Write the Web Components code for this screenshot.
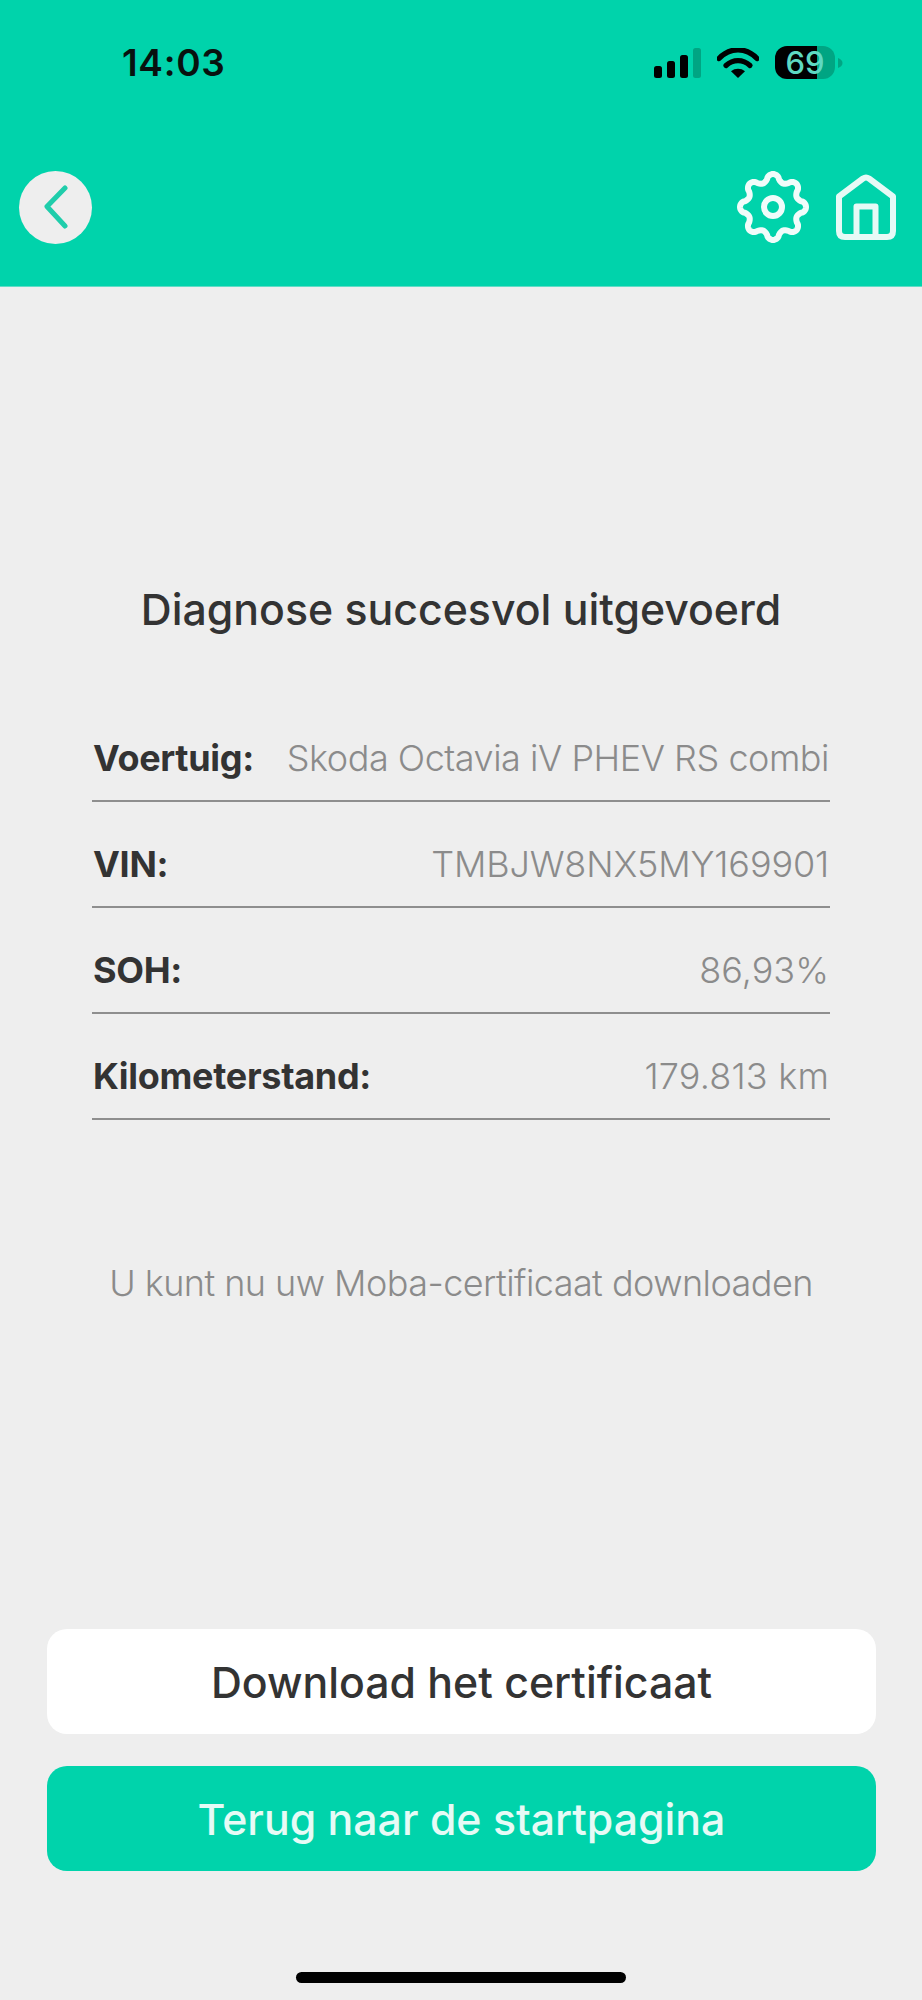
<!DOCTYPE html>
<html lang="nl"><head><meta charset="utf-8"><title>Diagnose</title>
<style>
html,body{margin:0;padding:0;background:#eeeeee}
body{font-family:Inter,"Liberation Sans",sans-serif}
</style></head><body>
<app-screen>
  <status-bar slot="top"></status-bar>
  <nav-bar slot="top"></nav-bar>
  <h-title>Diagnose succesvol uitgevoerd</h-title>
  <info-row label="Voertuig:" value="Skoda Octavia iV PHEV RS combi" style="--vs:-.47px"></info-row>
  <info-row label="VIN:" value="TMBJW8NX5MY169901" style="--vs:-.15px"></info-row>
  <info-row label="SOH:" value="86,93%" style="--vs:.05px"></info-row>
  <info-row label="Kilometerstand:" value="179.813 km" style="--vs:.2px"></info-row>
  <note-text>U kunt nu uw Moba-certificaat downloaden</note-text>
  <action-button slot="actions" kind="light">Download het certificaat</action-button>
  <action-button slot="actions" kind="brand">Terug naar de startpagina</action-button>
</app-screen>
<script>
function def(name, html, init){
  customElements.define(name, class extends HTMLElement{
    constructor(){super();const r=this.attachShadow({mode:'open'});r.innerHTML=html;if(init)init(r,this);}
  });
}
def('app-screen',`<style>
:host{display:flex;flex-direction:column;width:922px;height:2000px;overflow:hidden;background:#eee}
header{box-sizing:border-box;height:287px;background:#00d3ab;border-bottom:1px solid #5fdcc6;display:flex;flex-direction:column;flex:none}
main{flex:none;height:1342px;box-sizing:border-box;padding-top:298px}
.acts{display:flex;flex-direction:column;gap:32px;padding:0 46px 0 47px}
.home{flex:none;align-self:center;width:330px;height:11px;border-radius:6px;background:#000;margin-top:101px}
</style><header><slot name="top"></slot></header><main><slot></slot></main><div class="acts"><slot name="actions"></slot></div><div class="home"></div>`);

def('status-bar',`<style>
:host{display:flex;align-items:center;justify-content:space-between;height:47px;margin-top:39px;padding:0 79px 0 122px;flex:none}
.t{font:600 37px/47px Inter,"Liberation Sans",sans-serif;color:#08120f;letter-spacing:.7px}
.r{display:flex;align-items:center}
svg{display:block}
.batt{position:relative;width:68px;height:33px;margin-left:16px}
.n{position:absolute;left:4px;top:0;width:52px;height:33px;text-align:center;font:500 31px/33px Inter,"Liberation Sans",sans-serif;color:#5ed9c2}
</style><span class="t">14:03</span><div class="r">
<svg width="47" height="30" viewBox="0 0 47 30"><rect x="0" y="18" width="8" height="12" rx="2.5" fill="#000"/><rect x="13" y="13" width="8" height="17" rx="2.5" fill="#000"/><rect x="26" y="7" width="8" height="23" rx="2.5" fill="#000"/><rect x="39" y="0" width="8" height="30" rx="2.5" fill="#00a583"/></svg>
<svg style="margin-left:16px" width="42" height="30" viewBox="0 0 42 30"><path d="M2 10.5C13 -1 29 -1 40 10.5" fill="none" stroke="#000" stroke-width="5.4" stroke-linecap="round"/><path d="M9 17.5C16 11 26 11 33 17.5" fill="none" stroke="#000" stroke-width="5.2" stroke-linecap="round"/><path d="M14 23.3C18 20 24 20 28 23.3L21 30Z" fill="#000"/></svg>
<div class="batt"><svg width="68" height="33" viewBox="0 0 68 33"><path d="M12 0H42V33H12A12 12 0 0 1 0 21V12A12 12 0 0 1 12 0Z" fill="#000"/><path d="M42 0H48A12 12 0 0 1 60 12V21A12 12 0 0 1 48 33H42Z" fill="#00a583"/><path d="M63 12C66 13 67.500 15 67.500 17C67.500 19 66 21 63 22Z" fill="#00a583"/></svg><span class="n">69</span></div>
</div>`);

def('nav-bar',`<style>
:host{display:flex;align-items:center;justify-content:space-between;padding:0 26px 0 19px;margin-top:84px;flex:none}
.back{width:73px;height:73px;border-radius:50%;background:#eeeeee;display:flex;align-items:center;justify-content:center}
.r{display:flex;align-items:center;gap:26px}
svg{display:block}
</style>
<div class="back"><svg width="26" height="44" viewBox="0 0 26 44"><path d="M22 3L4 21.500L22 41" fill="none" stroke="#1fcdab" stroke-width="5" stroke-linecap="round" stroke-linejoin="round"/></svg></div>
<div class="r"><svg id="gear" width="74" height="74" viewBox="-37 -37 74 74"><path id="gp" fill="none" stroke="#f0fcfa" stroke-width="6"/><circle r="9" fill="none" stroke="#f0fcfa" stroke-width="6"/></svg>
<svg width="60" height="66" viewBox="0 0 60 66"><path d="M3 22.500L27 4.500Q30 2.500 33 4.500L57 22.500V57Q57 63 51 63H9Q3 63 3 57Z M20.500 62V32.500H39.500V62" fill="none" stroke="#e6faf6" stroke-width="6" stroke-linejoin="round"/></svg></div>`,
(r)=>{
  let d='';
  for(let i=0;i<=240;i++){
    const a=i/240*Math.PI*2, c=Math.cos(8*a);
    const s=Math.sign(c)*Math.pow(Math.abs(c),.7);
    const R=29.3+3.7*s;
    const x=R*Math.sin(a), y=-R*Math.cos(a);
    d+=(i?'L':'M')+x.toFixed(2)+' '+y.toFixed(2);
  }
  r.getElementById('gp').setAttribute('d',d+'Z');
});

def('h-title',`<style>
:host{display:block;text-align:center;font:500 42.800px/50px Inter,"Liberation Sans",sans-serif;color:#333;margin-bottom:61px}
</style><slot></slot>`);

def('info-row',`<style>
:host{display:flex;justify-content:space-between;align-items:flex-start;box-sizing:border-box;height:106px;margin:0 92px 0 92px;padding:39px 1px 0;border-bottom:2px solid #8e8e8e;font:400 36px/46px Inter,"Liberation Sans",sans-serif;letter-spacing:-.3px}
b{font-weight:700;color:#333}
span{color:#8b8b8b;font-weight:300;letter-spacing:var(--vs,-.3px)}
</style><b id="l"></b><span id="v"></span>`);
customElements.whenDefined('info-row').then(()=>{
  document.querySelectorAll('info-row').forEach(e=>{
    e.shadowRoot.getElementById('l').textContent=e.getAttribute('label');
    e.shadowRoot.getElementById('v').textContent=e.getAttribute('value');
  });
});

def('note-text',`<style>
:host{display:block;text-align:center;font:300 36px/46px Inter,"Liberation Sans",sans-serif;color:#8b8b8b;margin-top:140px;letter-spacing:-.55px}
</style><slot></slot>`);

def('action-button',`<style>
:host{display:flex;align-items:center;justify-content:center;height:105px;padding-top:3px;box-sizing:border-box;border-radius:20px;font:500 42.800px/50px Inter,"Liberation Sans",sans-serif;color:#333;background:#fff}
:host([kind=brand]){background:#00d3ab;color:#e6fbf6}
</style><slot></slot>`);
</script>
</body></html>
